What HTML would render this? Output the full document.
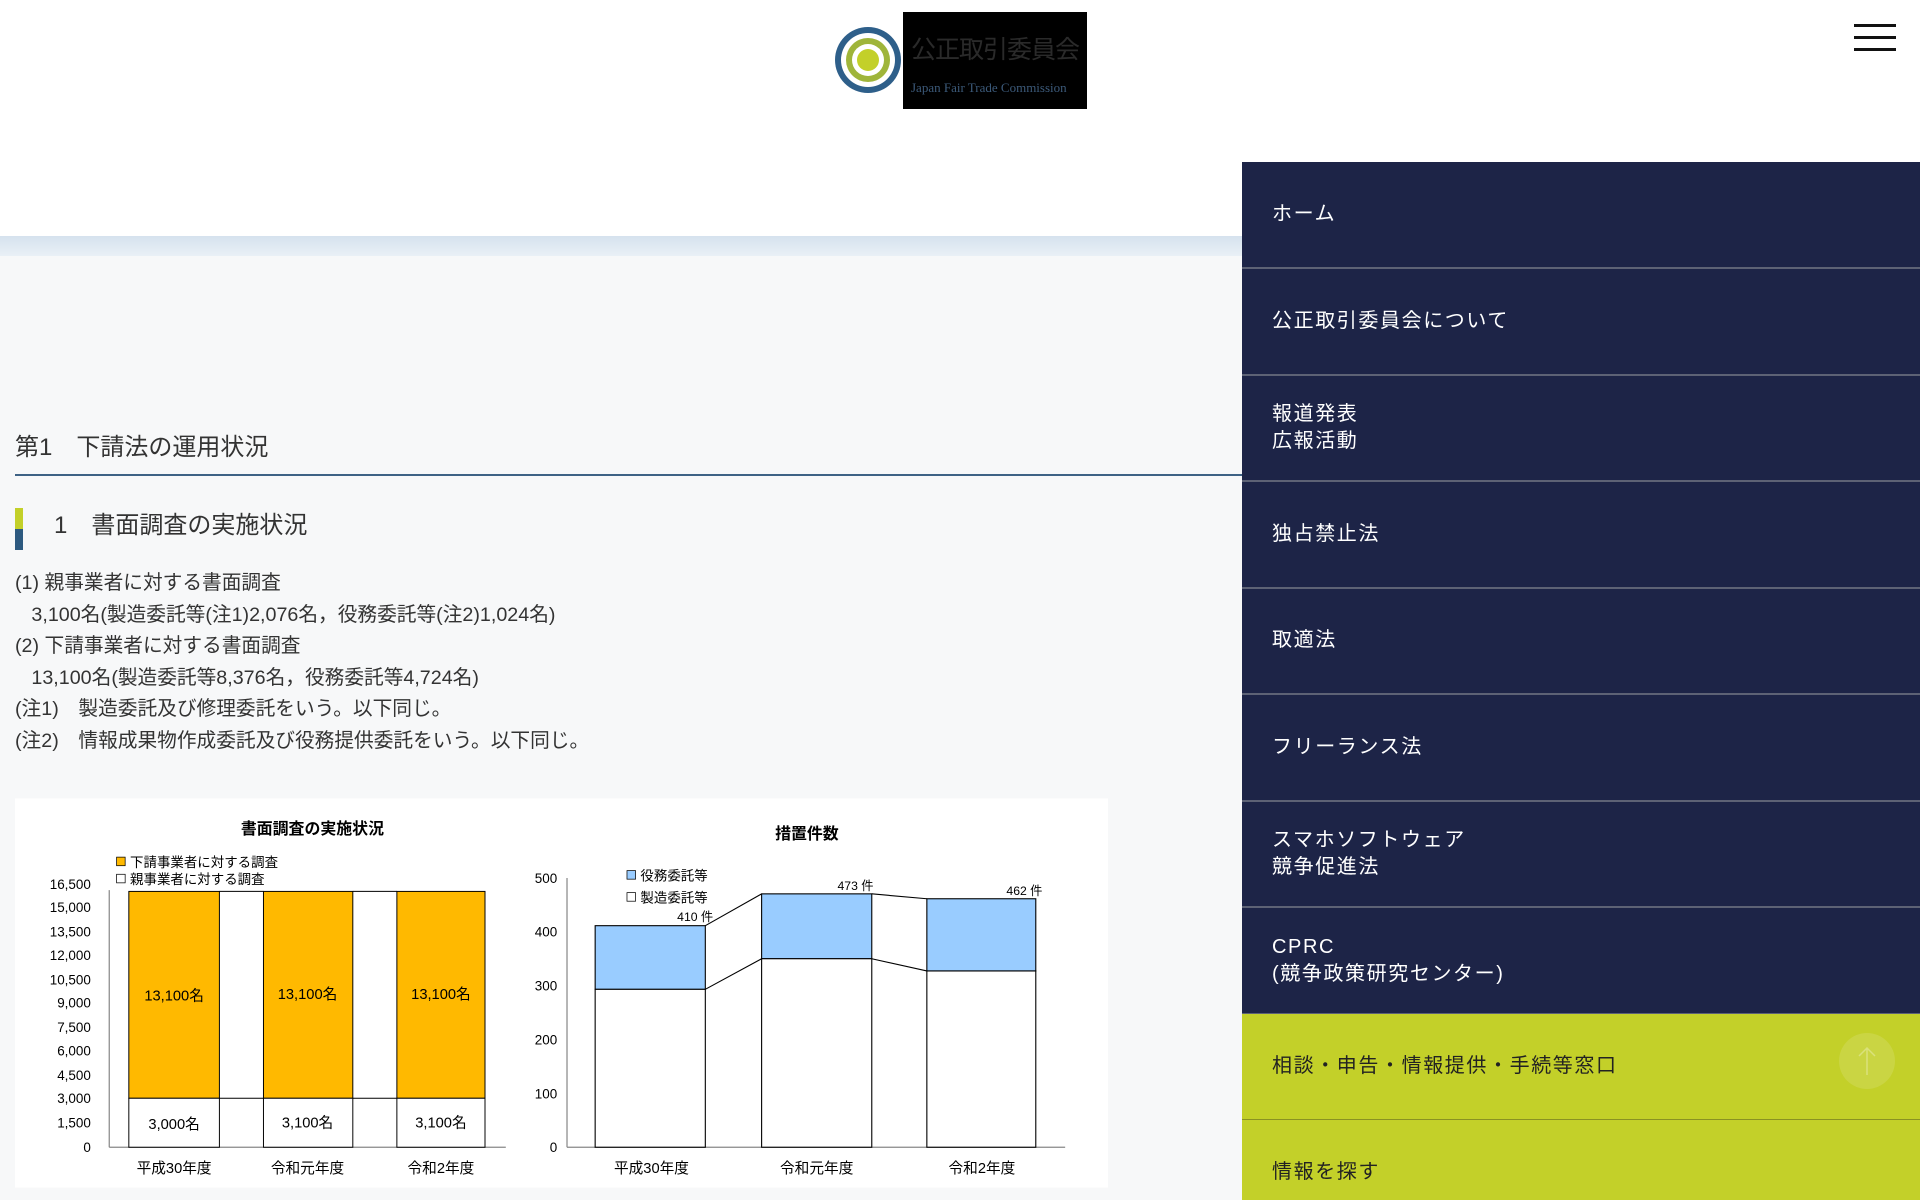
<!DOCTYPE html>
<html><head><meta charset="utf-8">
<style>
*{margin:0;padding:0;box-sizing:border-box}
body{width:1920px;height:1200px;overflow:hidden;background:#f7f8f9;font-family:"Liberation Sans","Noto Sans CJK JP",sans-serif;color:#222;position:relative}
.hdr{position:absolute;left:0;top:0;width:1920px;height:236px;background:#fff}
.band{position:absolute;left:0;top:236px;width:1242px;height:20px;background:linear-gradient(180deg,#d5e2ee,#e9f0f6)}
.logo{position:absolute;left:833px;top:12px;width:254px;height:97px;background:#000}
.logo .w{position:absolute;left:0;top:0;width:70px;height:97px;background:#fff}
.ham{position:absolute;left:1854px;width:42px;height:3px;background:#111}
.menu{position:absolute;left:1242px;top:162px;width:678px;height:1038px;background:#1d2447;overflow:hidden}
.it{position:absolute;left:0;width:678px;height:107px;border-bottom:2px solid #5d6275;color:#fff;font-size:20px;letter-spacing:1.6px;display:flex;align-items:center;padding-left:30px;line-height:27px}
.g{background:#c3d029;color:#222;border-bottom-color:#8a9222}
.t1{position:absolute;left:15px;top:427px;font-size:24px;color:#333}
.rule{position:absolute;left:15px;top:474px;width:1227px;height:2px;background:#3e6285}
.bar1{position:absolute;left:15px;top:508px;width:8px;height:21px;background:#c3d029}
.bar2{position:absolute;left:15px;top:529px;width:8px;height:21px;background:#2d5a80}
.t2{position:absolute;left:54px;top:505px;font-size:24px;color:#333}
.p{position:absolute;left:15px;top:568px;font-size:19.7px;line-height:31.5px;color:#333}
.chart{position:absolute;left:15px;top:798px}
</style></head><body>
<div class="hdr"></div>
<div class="band"></div>
<div class="logo"><div class="w">
<svg width="70" height="97" viewBox="0 0 70 97"><circle cx="35" cy="48" r="33" fill="#2e5f8a"/><circle cx="35" cy="48" r="27" fill="#fff"/><circle cx="35" cy="48" r="22" fill="#9fb53a"/><circle cx="35" cy="48" r="16" fill="#fff"/><circle cx="35" cy="48" r="11" fill="#c3d029"/></svg></div>
<div style="position:absolute;left:78px;top:18px;font-size:25px;color:#2a2a2a;white-space:nowrap;letter-spacing:-1px">公正取引委員会</div>
<div style="position:absolute;left:78px;top:68px;font-size:13px;color:#3c5a7a;white-space:nowrap;font-family:'Liberation Serif',serif">Japan Fair Trade Commission</div>
</div>
<div class="ham" style="top:24px"></div><div class="ham" style="top:36px"></div><div class="ham" style="top:48px"></div>

<div class="t1">第1　下請法の運用状況</div>
<div class="rule"></div>
<div class="bar1"></div><div class="bar2"></div>
<div class="t2">1　書面調査の実施状況</div>
<div class="p">(1) 親事業者に対する書面調査<br>&nbsp;&nbsp;&nbsp;3,100名(製造委託等(注1)2,076名，役務委託等(注2)1,024名)<br>(2) 下請事業者に対する書面調査<br>&nbsp;&nbsp;&nbsp;13,100名(製造委託等8,376名，役務委託等4,724名)<br>(注1)　製造委託及び修理委託をいう。以下同じ。<br>(注2)　情報成果物作成委託及び役務提供委託をいう。以下同じ。</div>

<svg class="chart" width="1093" height="390" viewBox="12 652 893 318" font-family="Liberation Sans,Noto Sans CJK JP,sans-serif">
<rect x="12" y="652" width="893" height="318" fill="#fff"/>
<text x="255" y="681" font-size="13" font-weight="bold" text-anchor="middle">書面調査の実施状況</text>
<rect x="95" y="700" width="7" height="7" fill="#ffb900" stroke="#000" stroke-width=".6"/><text x="106" y="708" font-size="11">下請事業者に対する調査</text>
<rect x="95" y="714" width="7" height="7" fill="#fff" stroke="#000" stroke-width=".6"/><text x="106" y="722" font-size="11">親事業者に対する調査</text>
<g font-size="11" text-anchor="end">
<text x="74" y="726">16,500</text><text x="74" y="745">15,000</text><text x="74" y="765">13,500</text><text x="74" y="784">12,000</text><text x="74" y="804">10,500</text><text x="74" y="823">9,000</text><text x="74" y="843">7,500</text><text x="74" y="862">6,000</text><text x="74" y="882">4,500</text><text x="74" y="901">3,000</text><text x="74" y="921">1,500</text><text x="74" y="941">0</text></g>
<line x1="89" y1="727" x2="89" y2="937" stroke="#888"/><line x1="89" y1="937" x2="413" y2="937" stroke="#888"/>
<g stroke="#000" stroke-width=".8">
<rect x="105" y="728" width="74" height="169" fill="#ffb900"/><rect x="105" y="897" width="74" height="40" fill="#fff"/>
<rect x="215" y="728" width="73" height="169" fill="#ffb900"/><rect x="215" y="897" width="73" height="40" fill="#fff"/>
<rect x="324" y="728" width="72" height="169" fill="#ffb900"/><rect x="324" y="897" width="72" height="40" fill="#fff"/>
<line x1="179" y1="728" x2="215" y2="728"/><line x1="179" y1="897" x2="215" y2="897"/><line x1="288" y1="728" x2="324" y2="728"/><line x1="288" y1="897" x2="324" y2="897"/></g>
<g font-size="12" text-anchor="middle"><text x="142" y="817">13,100名</text><text x="251" y="816">13,100名</text><text x="360" y="816">13,100名</text>
<text x="142" y="922">3,000名</text><text x="251" y="921">3,100名</text><text x="360" y="921">3,100名</text>
<text x="142" y="958">平成30年度</text><text x="251" y="958">令和元年度</text><text x="360" y="958">令和2年度</text>
<text x="659" y="685" font-size="13" font-weight="bold">措置件数</text>
<text x="532" y="878">292件</text><text x="532" y="787">118件</text><text x="667" y="865">351件</text><text x="667" y="761">122件</text><text x="802" y="870">328件</text><text x="802" y="768">134件</text>
<text x="532" y="958">平成30年度</text><text x="667" y="958">令和元年度</text><text x="802" y="958">令和2年度</text></g>
<g font-size="11" text-anchor="end"><text x="455" y="721">500</text><text x="455" y="765">400</text><text x="455" y="809">300</text><text x="455" y="853">200</text><text x="455" y="897">100</text><text x="455" y="941">0</text></g>
<rect x="512" y="711" width="7" height="7" fill="#99ccff" stroke="#000" stroke-width=".6"/><text x="523" y="719" font-size="11">役務委託等</text>
<rect x="512" y="729" width="7" height="7" fill="#fff" stroke="#000" stroke-width=".6"/><text x="523" y="737" font-size="11">製造委託等</text>
<g font-size="10"><text x="553" y="752">410 件</text><text x="684" y="727">473 件</text><text x="822" y="731">462 件</text></g>
<line x1="463" y1="717" x2="463" y2="937" stroke="#888"/><line x1="463" y1="937" x2="870" y2="937" stroke="#888"/>
<g stroke="#000" stroke-width=".9">
<rect x="486" y="756" width="90" height="52" fill="#99ccff"/><rect x="486" y="808" width="90" height="129" fill="#fff"/>
<rect x="622" y="730" width="90" height="53" fill="#99ccff"/><rect x="622" y="783" width="90" height="154" fill="#fff"/>
<rect x="757" y="734" width="89" height="59" fill="#99ccff"/><rect x="757" y="793" width="89" height="144" fill="#fff"/>
<line x1="576" y1="756" x2="622" y2="730"/><line x1="576" y1="808" x2="622" y2="783"/><line x1="712" y1="730" x2="757" y2="734"/><line x1="712" y1="783" x2="757" y2="793"/></g>
</svg>

<div class="menu">
<div class="it" style="top:0">ホーム</div>
<div class="it" style="top:107px">公正取引委員会について</div>
<div class="it" style="top:213px">報道発表<br>広報活動</div>
<div class="it" style="top:320px">独占禁止法</div>
<div class="it" style="top:426px">取適法</div>
<div class="it" style="top:533px">フリーランス法</div>
<div class="it" style="top:639px">スマホソフトウェア<br>競争促進法</div>
<div class="it" style="top:746px">CPRC<br>(競争政策研究センター)</div>
<div class="it g" style="top:852px">相談・申告・情報提供・手続等窓口</div>
<div class="it g" style="top:958px;height:107px">情報を探す</div>
</div>
<svg style="position:absolute;left:1838px;top:1032px" width="58" height="58"><circle cx="29" cy="29" r="28" fill="#fff" fill-opacity=".12"/><path d="M29 43V16M21 24l8-8 8 8" stroke="#fff" stroke-opacity=".3" stroke-width="1.5" fill="none"/></svg>
</body></html>
